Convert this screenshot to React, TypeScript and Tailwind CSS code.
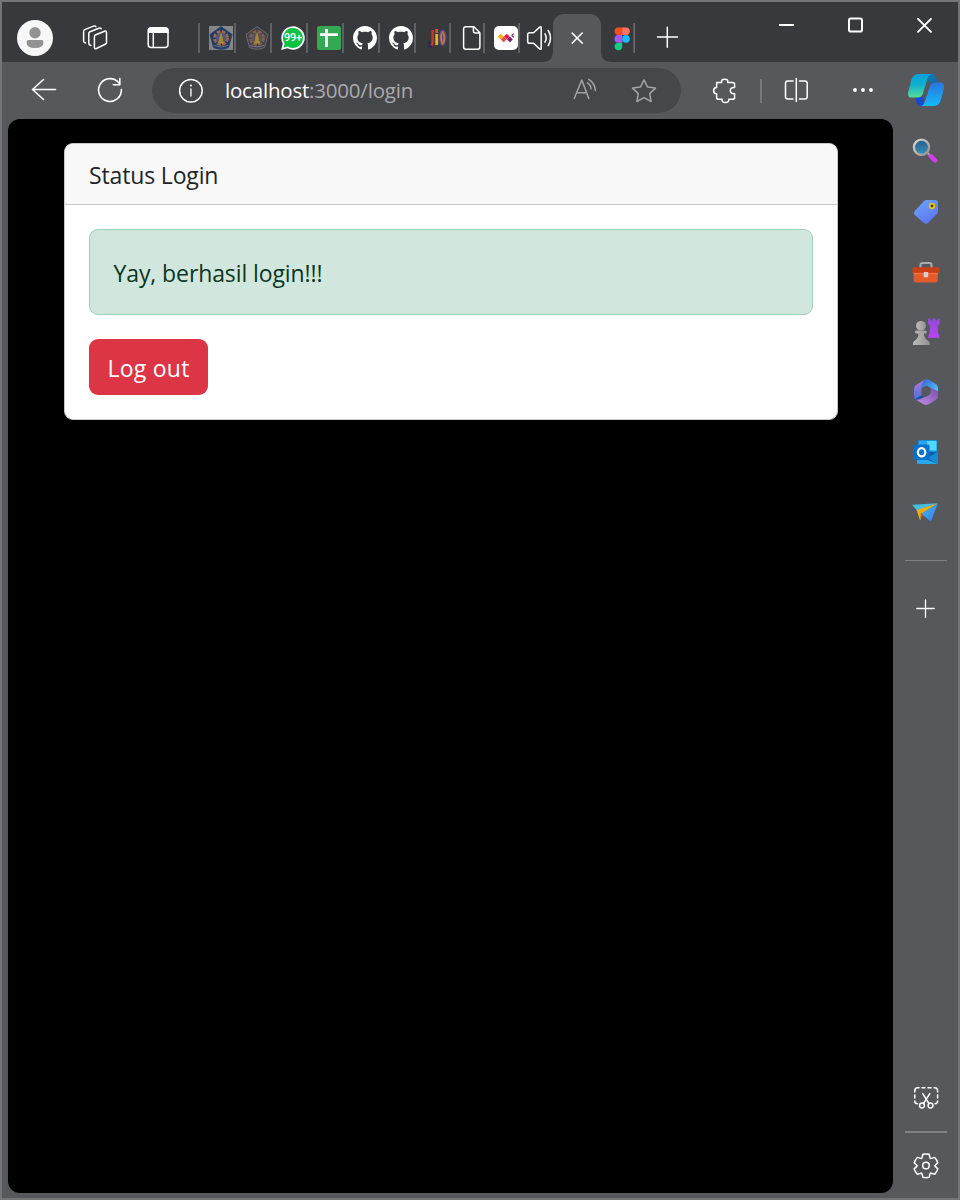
import type { ReactNode } from "react";

type BoxProps = {
  x: number;
  y: number;
  w: number;
  h: number;
  label?: string;
  className?: string;
  children: ReactNode;
};

// Drawing region expressed in window coordinates.
function Glyph({ x, y, w, h, label, className = "", children }: BoxProps) {
  return (
    <svg
      width={w}
      height={h}
      viewBox={`${x} ${y} ${w} ${h}`}
      fill="none"
      stroke="#fff"
      strokeWidth={1.5}
      strokeLinecap="round"
      strokeLinejoin="round"
      aria-label={label}
      className={`block shrink-0 ${className}`}
    >
      {children}
    </svg>
  );
}

function Favicon({ children }: { children: ReactNode }) {
  return (
    <svg width="24" height="24" viewBox="0 0 24 24" fill="none" className="block shrink-0">
      {children}
    </svg>
  );
}

function Slot({ narrow = false, children }: { narrow?: boolean; children: ReactNode }) {
  return (
    <div
      className={`mt-[21px] flex h-[30px] shrink-0 items-center border-l-2 border-[#5f6063] pl-[9px] ${
        narrow ? "w-[35px]" : "w-9"
      }`}
    >
      {children}
    </div>
  );
}

function Crest({ boxed = false }: { boxed?: boolean }) {
  return (
    <Favicon>
      {boxed && <path d="M0 0h24v24H0z" fill="#858688" />}
      <path
        d="M12 .6 23 8.5 19.5 21.5Q12 25 4.500 21.500L1 8.500Z"
        fill={boxed ? "#1f3a66" : "#44424f"}
        stroke={boxed ? "#29466f" : "#6b6870"}
        strokeWidth="1"
      />
      <circle cx="12" cy="12" r="6.400" stroke={boxed ? "#a9653f" : "#876044"} strokeWidth="3" strokeDasharray="3.600 1.430" />
      <circle cx="12" cy="12" r="5.300" fill={boxed ? "#4b5880" : "#555267"} />
      <path d="m12 6 1.600 5 .6 5H9.800l.6-5Z" fill="#a58a30" />
      <path d="M8.500 15.500h7l-1 2h-5z" fill="#a18c34" />
      <path d="M5 19.500Q12 22.500 19 19.500" stroke={boxed ? "#6f7886" : "#77747c"} strokeWidth="1" />
    </Favicon>
  );
}

function GithubMark() {
  return (
    <svg width="24" height="24" viewBox="0 0 16 16" fill="#fff" className="block shrink-0">
      <path d="M8 0c4.420 0 8 3.580 8 8a8.013 8.013 0 0 1-5.450 7.590c-.4.08-.55-.17-.55-.38 0-.27.01-1.130.01-2.200 0-.75-.25-1.230-.54-1.480 1.780-.2 3.650-.88 3.650-3.950 0-.88-.31-1.590-.82-2.150.08-.2.36-1.020-.08-2.120 0 0-.67-.22-2.200.82-.64-.18-1.320-.27-2-.27-.68 0-1.360.09-2 .27-1.530-1.030-2.200-.82-2.200-.82-.44 1.100-.16 1.920-.08 2.120-.51.56-.82 1.280-.82 2.150 0 3.060 1.860 3.750 3.640 3.950-.23.2-.44.55-.51 1.070-.46.21-1.610.55-2.330-.66-.15-.24-.6-.83-1.230-.82-.67.01-.27.38.01.53.34.19.73.9.82 1.130.16.45.68 1.310 2.690.94 0 .67.01 1.300.01 1.490 0 .21-.15.45-.55.38A7.995 7.995 0 0 1 0 8c0-4.420 3.580-8 8-8Z" />
    </svg>
  );
}

function TitleBar() {
  return (
    <header className="flex h-[60px] shrink-0 bg-[#38393c]">
      <Glyph x={2} y={2} w={64} h={60} label="Profile">
        <circle cx="35" cy="38" r="18" fill="#f7f7f7" stroke="none" />
        <circle cx="35" cy="32.800" r="5.700" fill="#929292" stroke="none" />
        <path d="M28.500 40h13q2 0 2 2 0 6-8.500 6t-8.500-6q0-2 2-2Z" fill="#929292" stroke="none" />
      </Glyph>
      <Glyph x={66} y={2} w={60} h={60} label="Workspaces">
        <path d="m95.300 35 9.200-3.800q2-.7 2 1.200v10q0 1.300-1.300 1.900l-8.800 4.200q-2 .7-2-1.200V36.500q0-1 .9-1.500Z" />
        <path d="M91 45.500 89.800 45q-1-.4-1-1.700v-9.800q0-1.300 1.200-1.800l8.800-3.500q1.700-.6 2.400.6" />
        <path d="m85.500 43-1.100-.6q-.8-.4-.8-1.500v-9.600q0-1.200 1.200-1.700l8.700-3.500q1.600-.6 2.400.5" />
      </Glyph>
      <Glyph x={126} y={2} w={72} h={60} label="Tab actions">
        <rect x="148.200" y="27.800" width="19.800" height="19.600" rx="3" />
        <path d="M148 32v-1.500q0-3 3-3h14.500q3 0 3 3V33H148Z" fill="#fff" stroke="none" />
        <path d="M153.300 33v14" />
      </Glyph>

      <Slot><Crest boxed /></Slot>
      <Slot><Crest /></Slot>
      <Slot>
        <div className="relative size-6 shrink-0">
          <Favicon>
            <path d="M12 .3A11.700 11.700 0 1 1 6.500 22.300L.2 24 1.800 17.700A11.700 11.700 0 0 1 12 .3Z" fill="#fff" />
            <path d="M12 2a10 10 0 1 1-5.200 18.600L2.500 21.700l1.100-4.200A10 10 0 0 1 12 2Z" fill="#0cc143" />
          </Favicon>
          <span className="absolute top-[5px] left-0 w-6 text-center font-[Roboto,sans-serif] text-[11px] leading-[14px] font-medium tracking-[-0.2px] text-white">99+</span>
        </div>
      </Slot>
      <Slot>
        <Favicon>
          <rect width="24" height="24" rx="2.500" fill="#34a853" />
          <path d="M3 8.700h18M9.500 3v18" stroke="#fff" strokeWidth="2.800" />
        </Favicon>
      </Slot>
      <Slot><GithubMark /></Slot>
      <Slot><GithubMark /></Slot>
      <Slot narrow>
        <Favicon>
          <path d="M7.700 4v12q0 3-2.500 4" stroke="#c8362a" strokeWidth="2.600" />
          <path d="M4.500 15v5.500H7" stroke="#25285a" strokeWidth="1.800" />
          <path d="M11.700 8v11" stroke="#eeb021" strokeWidth="2.800" />
          <path d="M11.700 3v4" stroke="#e4551f" strokeWidth="2.800" />
          <ellipse cx="17.700" cy="11.800" rx="3.300" ry="7.800" fill="#b56a3c" stroke="#4a4888" strokeWidth="1.300" />
          <ellipse cx="17.700" cy="11.500" rx="1.500" ry="4" fill="#5c4b9a" stroke="#d2893a" strokeWidth="1" />
        </Favicon>
      </Slot>
      <div className="mt-[21px] flex h-[30px] w-[34px] shrink-0 items-center border-l-2 border-[#5f6063] pl-[9px]">
        <Favicon>
          <path d="M5.900.8h8l6 6V21q0 2.200-2.200 2.200H5.900Q3.600 23.200 3.600 21V3Q3.600.8 5.900.8ZM13.400 .8V5q0 2 2 2h4.500" stroke="#fff" strokeWidth="1.500" strokeLinejoin="round" />
        </Favicon>
      </div>
      <Slot narrow>
        <Favicon>
          <rect width="24" height="24" rx="5" fill="#fff" />
          <path d="m6.600 7.700 2.900 2.900-2.900 2.900-2.900-2.900Z" fill="#f6b500" />
          <path d="m9.700 10.500 2.900 2.900-2.900 2.900-2.900-2.900Z" fill="#ee4a4a" />
          <path d="m12.800 7.700 2.900 2.900-2.900 2.900-2.900-2.900Z" fill="#e31c4f" />
          <path d="m15.900 10.500 2.900 2.900-2.900 2.900-2.900-2.900Z" fill="#7c1f64" />
          <path d="M20.200 8q-2.400 0-2.200 1.500t2 1.400" stroke="#8a246b" strokeWidth="1.200" />
        </Favicon>
      </Slot>
      <Glyph x={518} y={23} w={35} h={30} label="Mute tab" className="mt-[21px]">
        <path d="M519 23v30" stroke="#5f6063" strokeWidth="2" strokeLinecap="butt" />
        <path d="M529.500 32.800h4l6.200-5.700q1.500-1.100 1.500.7v20.400q0 1.800-1.500.7l-6.200-5.700h-4q-1.800 0-1.800-1.800v-6.800q0-1.800 1.800-1.800Z" />
        <path d="M545 33.800q2.300 4.200 0 8.400M548.300 30.500q4.400 7.500 0 15" />
      </Glyph>

      <div className="relative mt-3 flex h-12 w-12 shrink-0 items-center justify-center rounded-t-[11px] bg-[#57585c]">
        <svg width="11" height="11" viewBox="0 0 11 11" className="absolute bottom-0 -left-[11px]">
          <path d="M11 0Q11 11 0 11h11Z" fill="#57585c" />
        </svg>
        <svg width="12" height="12" viewBox="0 0 12 12" fill="none" stroke="#fff" strokeWidth="1.500">
          <path d="m.7.6 11 11m0-11-11 11" />
        </svg>
        <svg width="11" height="11" viewBox="0 0 11 11" className="absolute -right-[11px] bottom-0">
          <path d="M0 0Q0 11 11 11H0Z" fill="#57585c" />
        </svg>
      </div>

      <Glyph x={601} y={2} w={99} h={60} label="New tab">
        <g stroke="none">
          <path d="M622.200 27.500h-3.800a3.800 3.800 0 0 0 0 7.600h3.800Z" fill="#f24e1e" />
          <path d="M622.200 27.500h3.800a3.800 3.800 0 0 1 0 7.600h-3.800Z" fill="#ff7262" />
          <path d="M622.200 35.100h-3.800a3.800 3.800 0 0 0 0 7.600h3.800Z" fill="#a259ff" />
          <circle cx="626" cy="38.900" r="3.800" fill="#1abcfe" />
          <path d="M622.200 42.700h-3.800a3.800 3.800 0 1 0 3.800 3.800Z" fill="#0acf83" />
        </g>
        <path d="M634.200 23v30" stroke="#6b6c6f" strokeWidth="1.600" strokeLinecap="butt" />
        <path d="M657.500 37h20M667.300 27.300v20" strokeWidth="1.500" />
      </Glyph>
      <div className="flex-1" />
      <Glyph x={758} y={2} w={200} h={60} label="Window controls">
        <path d="M779 25h15" strokeWidth="2" strokeLinecap="butt" />
        <rect x="849" y="18.500" width="13" height="13" rx="1.800" strokeWidth="2" />
        <path d="m918 18.800 13 13m0-13-13 13" strokeWidth="1.900" />
      </Glyph>
    </header>
  );
}

function Toolbar() {
  return (
    <nav className="flex h-[57px] w-full shrink-0 items-start">
      <Glyph x={2} y={62} w={150} h={57} label="Back and refresh">
        <path d="M55.500 89.500H33M43.500 79.500l-11 10 11 10" strokeWidth="1.600" />
        <path d="M119 83A11.400 11.400 0 1 0 121.400 89.500" strokeWidth="1.600" />
        <path d="M119.800 78.500v6.300h-6.500" strokeWidth="1.600" />
      </Glyph>
      <div className="mt-1.5 flex h-[45px] w-[529px] shrink-0 rounded-full bg-[#46474a]">
        <Glyph x={152} y={68} w={73} h={45} label="Site information">
          <circle cx="190.900" cy="90.800" r="11.300" />
          <path d="M190.900 89v6.800" stroke="#d8d8d8" strokeWidth="1.700" />
          <circle cx="190.900" cy="85.500" r="1.100" fill="#fff" stroke="none" />
        </Glyph>
        <p className="flex-1 font-['Open_Sans',sans-serif] text-[20.5px] leading-[44px] tracking-[-0.2px] whitespace-nowrap text-[#a9aaac]">
          <span className="text-white">localhost</span>:3000/login
        </p>
        <Glyph x={558} y={68} w={123} h={45} label="Read aloud and favorite" className="opacity-50">
          <path d="m574 99 7.800-19L589 99M576.700 92.700h10" strokeLinecap="butt" />
          <path d="M587.500 82.800q3.300 2 3.500 6M588.700 79.300q6 3.500 6.700 11.200" />
          <path d="m644 79.800 3.500 7.200 8 1.100-5.800 5.500 1.400 7.900-7.100-3.800-7.100 3.800 1.400-7.900-5.800-5.500 8-1.100Z" />
        </Glyph>
      </div>
      <Glyph x={681} y={62} w={212} h={57} label="Browser tools">
        <path d="M716.600 82.500h5.100q-.9-3.300 3-3.300t3 3.300h5q1.900 0 1.900 1.900v3.200q-4.300-.4-4.300 3t4.300 3v3.800q0 1.900-1.900 1.900h-3.900q.3 3.200-3.400 3.200t-3.400-3.200h-3.500q-1.900 0-1.900-1.900v-3.500q-3-.2-3-3.300t3-3.200v-3q0-1.900 1.900-1.900Z" />
        <path d="M761 79v24" stroke="#77787b" strokeWidth="2" strokeLinecap="butt" />
        <path d="M796.300 78.500v23M793 81h-5.200q-2.300 0-2.300 2.300v13.400q0 2.300 2.300 2.300h5.200M799.500 81h5.400q2.300 0 2.300 2.300v13.400q0 2.300-2.300 2.300h-5.400" />
        <g fill="#fff" stroke="none">
          <circle cx="855" cy="90" r="1.900" />
          <circle cx="863" cy="90" r="1.900" />
          <circle cx="871" cy="90" r="1.900" />
        </g>
      </Glyph>
    </nav>
  );
}

function Gradients() {
  return (
    <defs>
      <linearGradient id="copilotLeft" x1="0" y1="0" x2="0" y2="1">
        <stop stopColor="#0ba0dd" />
        <stop offset=".45" stopColor="#0fb0cf" />
        <stop offset="1" stopColor="#57dc94" />
      </linearGradient>
      <linearGradient id="copilotRight" x1="0" y1="0" x2="0" y2="1">
        <stop stopColor="#2a74df" />
        <stop offset="1" stopColor="#12bafa" />
      </linearGradient>
      <linearGradient id="copilotTop" x1="0" y1="0" x2="1" y2="1">
        <stop stopColor="#0b83bd" />
        <stop offset="1" stopColor="#16679c" />
      </linearGradient>
    </defs>
  );
}

function Sidebar() {
  return (
    <aside className="flex w-[65px] shrink-0 flex-col items-center pl-px">
      <Glyph x={904} y={62} w={44} h={58} label="Copilot">
        <Gradients />
        <g stroke="none">
          <path d="M927 74h5.500q2.500 0 3.400 2.800l2 6.200h-8l-5-9Z" fill="url(#copilotTop)" />
          <path d="M915 97h9l-1 9h-3q-2.500 0-3.300-3Z" fill="#1748d1" />
          <path d="M918 74h15q-4 0-5.300 4l-4.800 15.500q-1.200 4-5.200 4h-6.200q-4.300 0-3.300-5.500l3-11.500Q913 74 918 74Z" fill="url(#copilotLeft)" />
          <path d="M935.300 82.500h5.200q4.300 0 3.500 5.500l-2.800 11q-2 7-7 7H919.500q4.200 0 5.300-4l4.500-14.500q1.500-5 6-5Z" fill="url(#copilotRight)" />
          <path d="M928.500 83h3q-1.500 1.500-2.300 4l-2.500 8q-.7 2.300-2.200 2.300h-3q1.500-1 2.200-3.300l2.500-8q.8-2.500 2.300-3Z" fill="#57585c" />
        </g>
      </Glyph>
      <Glyph x={905} y={120} w={42} h={60} label="Search">
        <defs>
          <linearGradient id="lens" x1="0" y1="0" x2="0" y2="1"><stop stopColor="#245b87" /><stop offset="1" stopColor="#3b91b8" /></linearGradient>
          <linearGradient id="rim" x1="0" y1="0" x2="1" y2="1"><stop stopColor="#d8d6d4" /><stop offset="1" stopColor="#91908f" /></linearGradient>
        </defs>
        <path d="m928 153.500 2.500 2.500" stroke="#aaa7a7" strokeWidth="2.200" />
        <path d="m930.700 156.200 4.600 4.300" stroke="#d63bf2" strokeWidth="4.400" />
        <circle cx="921.500" cy="147.200" r="7.600" fill="url(#lens)" stroke="url(#rim)" strokeWidth="2.400" />
      </Glyph>
      <Glyph x={905} y={180} w={42} h={60} label="Shopping">
        <defs>
          <linearGradient id="tag" x1="0" y1="0" x2=".7" y2="1"><stop stopColor="#6ca8fb" /><stop offset="1" stopColor="#5c73f2" /></linearGradient>
        </defs>
        <path d="M926.500 200h9q2.500 0 2.500 2.500v9q0 1.300-1 2.300l-8.700 9q-2.300 2.200-4.600 0l-8.700-7.600q-2.200-2.200 0-4.400l9-9.800q1-1 2.500-1Z" fill="url(#tag)" stroke="none" />
        <circle cx="932" cy="206" r="2.300" fill="#473f35" stroke="#f0c90b" strokeWidth="1.700" />
      </Glyph>
      <Glyph x={905} y={240} w={42} h={60} label="Tools">
        <path d="M920.500 268v-3q0-2 2-2h7q2 0 2 2v3" stroke="#aaa" strokeWidth="2" />
        <g stroke="none">
          <path d="M913.600 272h24.200v8q0 2.500-2.500 2.500h-19.200q-2.500 0-2.500-2.500Z" fill="#e55a2b" />
          <path d="M914 267.200h24q1.500 0 1.500 1.500v4.100h-27v-4.100q0-1.500 1.500-1.500Z" fill="#c94017" />
          <path d="M913.600 273h24.200v1.200h-24.200Z" fill="#f37542" />
          <rect x="923.700" y="272" width="4.500" height="5.200" rx=".7" fill="#d4d1d0" />
        </g>
      </Glyph>
      <Glyph x={905} y={300} w={42} h={60} label="Games">
        <defs>
          <linearGradient id="rook" x1="0" y1="0" x2="0" y2="1"><stop stopColor="#8d4bd5" /><stop offset="1" stopColor="#bb44ff" /></linearGradient>
          <linearGradient id="pawn" x1="0" y1="0" x2="1" y2="0"><stop stopColor="#bcbaba" /><stop offset="1" stopColor="#949292" /></linearGradient>
        </defs>
        <g stroke="none">
          <path d="M928 318.500h2.500v2h2v-2h3v2h2v-2h2.300v5l-2.200 2.500.5 7 1.500 4.800H928l1.500-4.800.5-7-2-2.500Z" fill="url(#rook)" />
          <circle cx="921" cy="325.800" r="4.900" fill="url(#pawn)" />
          <path d="M916.500 330.500h9q1.500 0 1.500 1.500t-1.500 1.500h-1.500q0 5 4.200 7.200 1.600 1 1.600 4.300h-17q0-3.300 1.600-4.300 4.100-2.200 4.100-7.200h-2q-1.500 0-1.500-1.500t1.500-1.500Z" fill="url(#pawn)" />
        </g>
      </Glyph>
      <Glyph x={905} y={360} w={42} h={60} label="Microsoft 365">
        <defs>
          <linearGradient id="m1" x1="0" y1="0" x2="0" y2="1"><stop stopColor="#ad7be2" /><stop offset="1" stopColor="#496fdd" /></linearGradient>
          <linearGradient id="m2" x1="0" y1="0" x2="1" y2="1"><stop stopColor="#345bd0" /><stop offset="1" stopColor="#57c9ff" /></linearGradient>
          <linearGradient id="m3" x1="0" y1="1" x2="1" y2="0"><stop stopColor="#c58be6" /><stop offset="1" stopColor="#7651ab" /></linearGradient>
        </defs>
        <g stroke="none">
          <path d="m926 379-10 6q-2 1.200-2 3.500v8q0 2.300 2 3.200 2.300 1 4.400-.5l3.200-2-2-1.200V388q0-5 4.400-9Z" fill="url(#m1)" />
          <path d="m926 379 2.500.4 7.500 4.600q2 1.300 2 3.500v4.300l-7.500-4-4-2.300-5 2.700V386q0-3.500 4.500-7Z" fill="url(#m2)" />
          <path d="M938 391.500v4.800q0 2.200-2 3.500l-7.300 4.400q-2.700 1.600-5.300 0l-6.900-4.100q3 .2 5.300-1.600l8.700-5.300v-5.600Z" fill="url(#m3)" />
          <path d="m915.500 399.500 9-2.300-3.200-1.700-5 2.800Z" fill="#1f4d8c" />
          <path d="m926 387 4.300 2.500v4.600L926 397l-4.300-2.500v-5Z" fill="#57585c" />
        </g>
      </Glyph>
      <Glyph x={905} y={420} w={42} h={60} label="Outlook">
        <g stroke="none">
          <path d="M918.500 440h17.600q1 0 1 1v13h-18.600Z" fill="#1490df" />
          <path d="M927 441h9.500v9.500H927Z" fill="#50d9ff" />
          <path d="M918.500 441h8.500v9.500h-8.500Z" fill="#28a8ea" />
          <path d="M917 452h20v10.500h-20Z" fill="#0a5fa8" />
          <path d="m938 451.500-10.500 6.500 9.500 6h1Z" fill="#1689d6" />
          <path d="M917 455.500 937.500 464h-19.300q-1.200 0-1.200-1.200Z" fill="#28a8ea" />
          <rect x="914" y="444.500" width="15.500" height="15.500" rx="1.500" fill="#0871ca" />
        </g>
        <ellipse cx="921.600" cy="452.300" rx="3.700" ry="4.100" strokeWidth="2.200" />
      </Glyph>
      <Glyph x={905} y={480} w={42} h={60} label="Drop">
        <defs>
          <linearGradient id="wing" x1="0" y1="0" x2="1" y2="1"><stop stopColor="#46b6f3" /><stop offset="1" stopColor="#377ee8" /></linearGradient>
        </defs>
        <g stroke="none">
          <path d="M912.200 504.800 938 503.200l-21.200 7.300Z" fill="#43bde9" />
          <path d="M916.600 510 938 503.200l-16 10.300-1.300 6q-.5.900-1 0Z" fill="#f0ae10" />
          <path d="M938 503.200 931.500 520q-.7 1.300-2 .6l-8.500-6.800Z" fill="url(#wing)" />
          <path d="m920.700 512.500 1.900 1.600-2.200 5.400Z" fill="#b26d08" />
        </g>
      </Glyph>
      <div className="mt-5 h-px w-[42px] bg-[#808184]" />
      <Glyph x={905} y={561} w={42} h={90} label="Customize">
        <path d="M916.800 608.500h17.500M925.500 599.800v17.500" strokeWidth="1.300" />
      </Glyph>
      <div className="flex-1" />
      <Glyph x={905} y={1071} w={42} h={60} label="Screenshot">
        <path d="M914.800 1092v-1.300q0-2.900 2.900-2.900h1.300M922 1087.800h3M928 1087.800h3M934 1087.800h.7q2.900 0 2.900 2.900v1.300M937.600 1095v3M937.600 1101v.3q0 2.400-2.600 2.400M914.800 1095v3M914.800 1101v.3q0 2.400 2.600 2.400" />
        <circle cx="922" cy="1105.500" r="2.400" />
        <circle cx="930.500" cy="1105.500" r="2.400" />
        <path d="m923.500 1103.500 6.300-9.800M929 1103.500l-6.300-9.800" />
      </Glyph>
      <div className="h-0.5 w-[42px] bg-[#808184]" />
      <Glyph x={905} y={1133} w={42} h={65} label="Settings">
        <path d="M922.900 1154.300q3.100-.8 6.200 0l.9 3.500q.3.900 1.200.6l3.500-1q2.200 2.300 3.100 5.300l-2.600 2.500q-.7.600 0 1.200l2.600 2.500q-.9 3-3.100 5.300l-3.500-1q-.9-.3-1.200.6l-.9 3.500q-3.100.8-6.200 0l-.9-3.500q-.3-.9-1.200-.6l-3.500 1q-2.200-2.300-3.100-5.300l2.600-2.500q.7-.6 0-1.200l-2.600-2.500q.9-3 3.100-5.300l3.500 1q.9.3 1.200-.6Z" />
        <circle cx="926" cy="1165.500" r="3.300" />
      </Glyph>
    </aside>
  );
}

function LoginPage() {
  return (
    <main className="ml-1.5 flex-1 rounded-xl bg-black px-14 pt-6 font-['Open_Sans',sans-serif]">
      <section className="h-[277px] w-[774px] rounded-[9px] border border-[#c9c9c9] bg-white">
        <h1 className="h-[61px] rounded-t-[8px] border-b border-[#c9c9c9] bg-[#f8f8f8] px-6 pt-[13px] text-[23px] leading-9 tracking-[-0.15px] text-[#212529]">
          Status Login
        </h1>
        <div className="p-6">
          <p className="h-[86px] rounded-[9px] border border-[#a3cfbb] bg-[#d1e7dd] px-[23.5px] pt-[25px] text-[23px] leading-9 tracking-[-0.1px] text-[#0a3622]">
            Yay, berhasil login!!!
          </p>
          <button className="mt-6 block h-14 w-[119px] rounded-[9px] bg-[#dc3545] pt-[2px] text-[23px] leading-9 tracking-[0.25px] whitespace-nowrap text-white">
            Log out
          </button>
        </div>
      </section>
    </main>
  );
}

export default function App() {
  return (
    <div className="flex h-[1200px] w-[960px] flex-col overflow-hidden border-2 border-[#747577] bg-[#57585c]">
      <TitleBar />
      <div className="flex min-h-0 flex-1">
        <div className="flex w-[891px] shrink-0 flex-col pb-[5px]">
          <Toolbar />
          <LoginPage />
        </div>
        <Sidebar />
      </div>
    </div>
  );
}
